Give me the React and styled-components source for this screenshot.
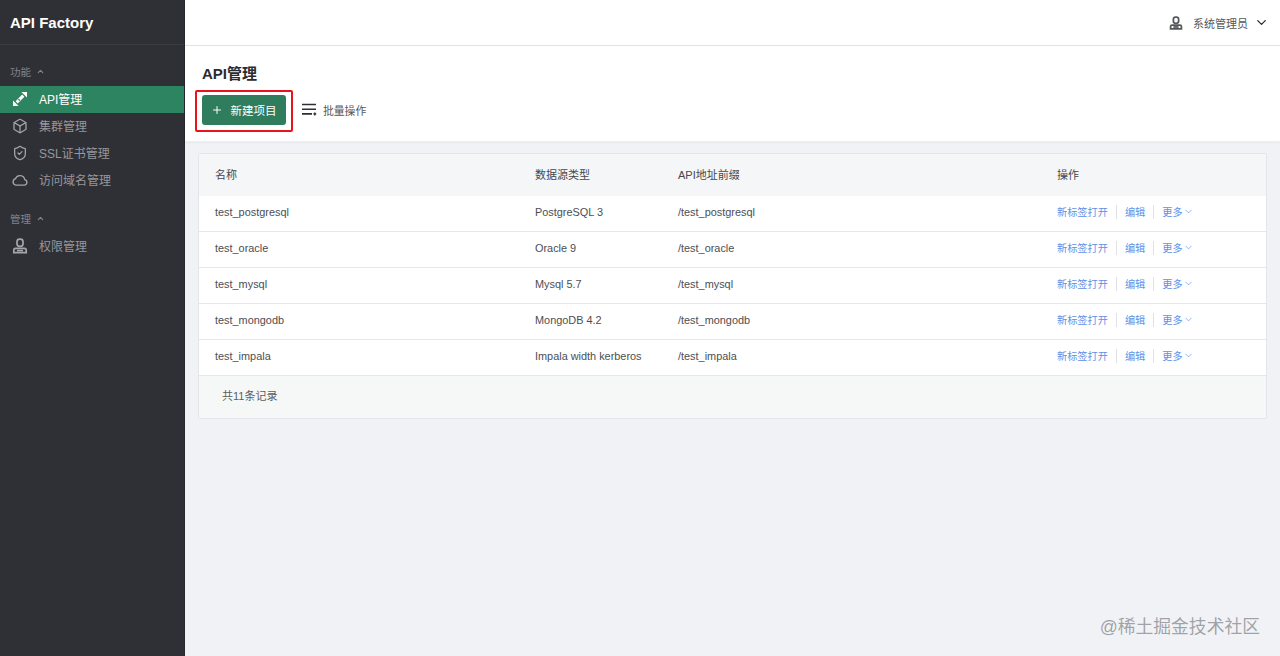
import styled, { createGlobalStyle } from 'styled-components';
import { Box, ShieldCheck, ChevronUp, ChevronDown, Plus } from 'lucide-react';

const GlobalStyle = createGlobalStyle`
  html, body {
    margin: 0;
    padding: 0;
    height: 100%;
    overflow: hidden;
    background: #f0f2f5;
    font-family: "Liberation Sans", "Noto Sans CJK SC", sans-serif;
  }
`;

const Layout = styled.div`
  display: flex;
  height: 656px;
  position: relative;
`;

const Sidebar = styled.aside`
  width: 184px;
  flex-shrink: 0;
  background: #2f3036;
  border-right: 1px solid #26272c;
`;

const Brand = styled.div`
  height: 44px;
  display: flex;
  align-items: center;
  padding-left: 10px;
  font-size: 15px;
  font-weight: 700;
  color: #fff;
  border-bottom: 1px solid #3a3b42;
`;

const Nav = styled.nav`
  padding-top: 12px;
`;

const GroupLabel = styled.div`
  height: 29px;
  box-sizing: border-box;
  padding: 0 0 1px 10px;
  display: flex;
  align-items: center;
  gap: 5px;
  font-size: 10.5px;
  color: #83848b;
`;

const NavGroup = styled.div`
  margin-bottom: 10px;
`;

const NavItem = styled.div`
  height: 27px;
  box-sizing: border-box;
  padding: 0 0 2px 12px;
  display: flex;
  align-items: center;
  gap: 11px;
  font-size: 12px;
  color: ${p => (p.$active ? '#fff' : '#96979d')};
  background: ${p => (p.$active ? '#2c8560' : 'transparent')};
`;

const IconSlot = styled.span`
  width: 16px;
  height: 16px;
  display: flex;
  align-items: center;
  justify-content: center;
  color: #a4a5aa;
`;

const Main = styled.div`
  flex: 1;
  display: flex;
  flex-direction: column;
  min-width: 0;
`;

const TopBar = styled.header`
  height: 45px;
  background: #fff;
  border-bottom: 1px solid #e2e3e5;
  display: flex;
  align-items: center;
  justify-content: flex-end;
  padding-right: 11px;
  gap: 6px;
  font-size: 11px;
  color: #55575c;
`;

const UserIcon = styled.span`
  display: flex;
  margin-right: 4px;
`;

const PageHead = styled.section`
  height: 96px;
  background: #fff;
  padding: 17px 0 0 17px;
  box-sizing: border-box;
  border-bottom: 1px solid #ebedf0;
  box-shadow: 0 1px 3px rgba(0, 0, 0, 0.04);
`;

const PageTitle = styled.h1`
  margin: 0 0 10px;
  font-size: 15px;
  line-height: 22px;
  font-weight: 700;
  color: #2b2c30;
`;

const Actions = styled.div`
  display: flex;
  align-items: center;
  height: 30px;
`;

const Highlight = styled.div`
  margin: 2px 9px 0 -7px;
  border: 2px solid #e8141b;
  border-radius: 2px;
  box-sizing: border-box;
  width: 98px;
  height: 42px;
  flex-shrink: 0;
  display: flex;
  align-items: center;
  justify-content: center;
`;

const PrimaryButton = styled.button`
  width: 84px;
  height: 30px;
  flex-shrink: 0;
  border: none;
  border-radius: 3px;
  background: #2f7d5c;
  color: #fff;
  font: inherit;
  font-size: 11.5px;
  display: flex;
  align-items: center;
  gap: 8px;
  padding: 0 0 0 9px;
  margin: -2px 0 0 -1px;
`;

const BatchAction = styled.div`
  display: flex;
  align-items: center;
  gap: 6px;
  padding-bottom: 1px;
  font-size: 10.8px;
  color: #55575c;
`;

const Content = styled.main`
  flex: 1;
  padding: 11px 13px 0;
`;

const Card = styled.div`
  background: #fff;
  border: 1px solid #e3e5e8;
  border-radius: 2px;
`;

const Row = styled.div`
  display: grid;
  grid-template-columns: 320px 143px 379px 1fr;
  align-items: center;
  height: 36px;
  padding: 0 0 4px 16px;
  font-size: 10.9px;
  color: #4c4e53;
  border-bottom: 1px solid #e6e7e9;
  box-sizing: border-box;
`;

const HeadRow = styled(Row)`
  height: 42px;
  padding-bottom: 2px;
  background: #f5f6f7;
  border-bottom: none;
  font-size: 11px;
  color: #45474c;
`;

const Links = styled.div`
  display: flex;
  align-items: center;
  color: #5f8fe8;
  font-size: 10.2px;
`;

const Divider = styled.span`
  width: 1px;
  height: 14px;
  background: #dfe1e4;
  margin: 0 8px;
`;

const More = styled.span`
  display: flex;
  align-items: center;
`;

const CardFooter = styled.div`
  height: 42px;
  padding: 0 0 4px 23px;
  box-sizing: border-box;
  background: #f6f7f7;
  display: flex;
  align-items: center;
  font-size: 11px;
  color: #5c5e63;
`;

const Watermark = styled.div`
  position: absolute;
  right: 20px;
  bottom: 18px;
  font-size: 17.8px;
  line-height: 22px;
  color: rgba(90, 92, 98, 0.55);
`;

const rows = [
  ['test_postgresql', 'PostgreSQL 3'],
  ['test_oracle', 'Oracle 9'],
  ['test_mysql', 'Mysql 5.7'],
  ['test_mongodb', 'MongoDB 4.2'],
  ['test_impala', 'Impala width kerberos'],
];

function PersonIcon({ size = 16, strokeWidth = 1.7 }) {
  return (
    <svg width={size} height={size} viewBox="0 0 16 16" fill="none" stroke="currentColor" strokeWidth={strokeWidth}>
      <rect x="5" y="1.2" width="6" height="7.2" rx="2.6" />
      <path d="M1.8 14.6v-2.4c0-1 .8-1.8 1.8-1.8h8.8c1 0 1.8.8 1.8 1.8v2.4z" />
      <path d="M5 12.6h6" />
    </svg>
  );
}

function ApiIcon() {
  return (
    <svg width="16" height="16" viewBox="0 0 16 16" fill="#fff">
      <path d="M9.4 1h5.6v5.6z" />
      <path d="M1 9.4V15h5.6z" />
      <path d="M3.6 10.2l6.6-6.6 2.2 2.2-6.6 6.6z" />
      <path d="M6.9 7.7l1.4 1.4-1 1-1.4-1.4z" fill="#2c8560" />
    </svg>
  );
}

function CloudIcon() {
  return (
    <svg width="18" height="14" viewBox="0 0 18 14" fill="none" stroke="currentColor" strokeWidth="1.5">
      <path d="M4.4 12.8h9.4a3.2 3.2 0 0 0 .5-6.3A5.4 5.4 0 0 0 4 5.4a3.8 3.8 0 0 0 .4 7.4z" />
    </svg>
  );
}

function ListIcon() {
  return (
    <svg width="15" height="13" viewBox="0 0 15 13" fill="none" stroke="#2f3035" strokeWidth="1.6">
      <path d="M0 1.5h14M0 6.2h14M0 10.9h10" />
      <path d="M12.8 9.4v3M11.3 10.9h3" strokeWidth="1.4" />
    </svg>
  );
}

export default function App() {
  return (
    <Layout>
      <GlobalStyle />
      <Sidebar>
        <Brand>API Factory</Brand>
        <Nav>
          <NavGroup>
            <GroupLabel>功能 <ChevronUp size={9} strokeWidth={3} /></GroupLabel>
            <NavItem $active><IconSlot><ApiIcon /></IconSlot>API管理</NavItem>
            <NavItem><IconSlot><Box size={16} strokeWidth={1.9} /></IconSlot>集群管理</NavItem>
            <NavItem><IconSlot><ShieldCheck size={16} strokeWidth={1.9} /></IconSlot>SSL证书管理</NavItem>
            <NavItem><IconSlot><CloudIcon /></IconSlot>访问域名管理</NavItem>
          </NavGroup>
          <NavGroup>
            <GroupLabel>管理 <ChevronUp size={9} strokeWidth={3} /></GroupLabel>
            <NavItem><IconSlot><PersonIcon /></IconSlot>权限管理</NavItem>
          </NavGroup>
        </Nav>
      </Sidebar>
      <Main>
        <TopBar>
          <UserIcon><PersonIcon size={14} strokeWidth={2} /></UserIcon>
          <span>系统管理员</span>
          <ChevronDown size={15} color="#2f3035" strokeWidth={2.2} />
        </TopBar>
        <PageHead>
          <PageTitle>API管理</PageTitle>
          <Actions>
            <Highlight>
              <PrimaryButton><Plus size={12} strokeWidth={2} />新建项目</PrimaryButton>
            </Highlight>
            <BatchAction><ListIcon />批量操作</BatchAction>
          </Actions>
        </PageHead>
        <Content>
          <Card>
            <HeadRow>
              <span>名称</span>
              <span>数据源类型</span>
              <span>API地址前缀</span>
              <span>操作</span>
            </HeadRow>
            {rows.map(([name, type]) => (
              <Row key={name}>
                <span>{name}</span>
                <span>{type}</span>
                <span>/{name}</span>
                <Links>
                  <span>新标签打开</span>
                  <Divider />
                  <span>编辑</span>
                  <Divider />
                  <More>更多<ChevronDown size={11} strokeWidth={1.4} /></More>
                </Links>
              </Row>
            ))}
            <CardFooter>共11条记录</CardFooter>
          </Card>
        </Content>
      </Main>
      <Watermark>@稀土掘金技术社区</Watermark>
    </Layout>
  );
}
